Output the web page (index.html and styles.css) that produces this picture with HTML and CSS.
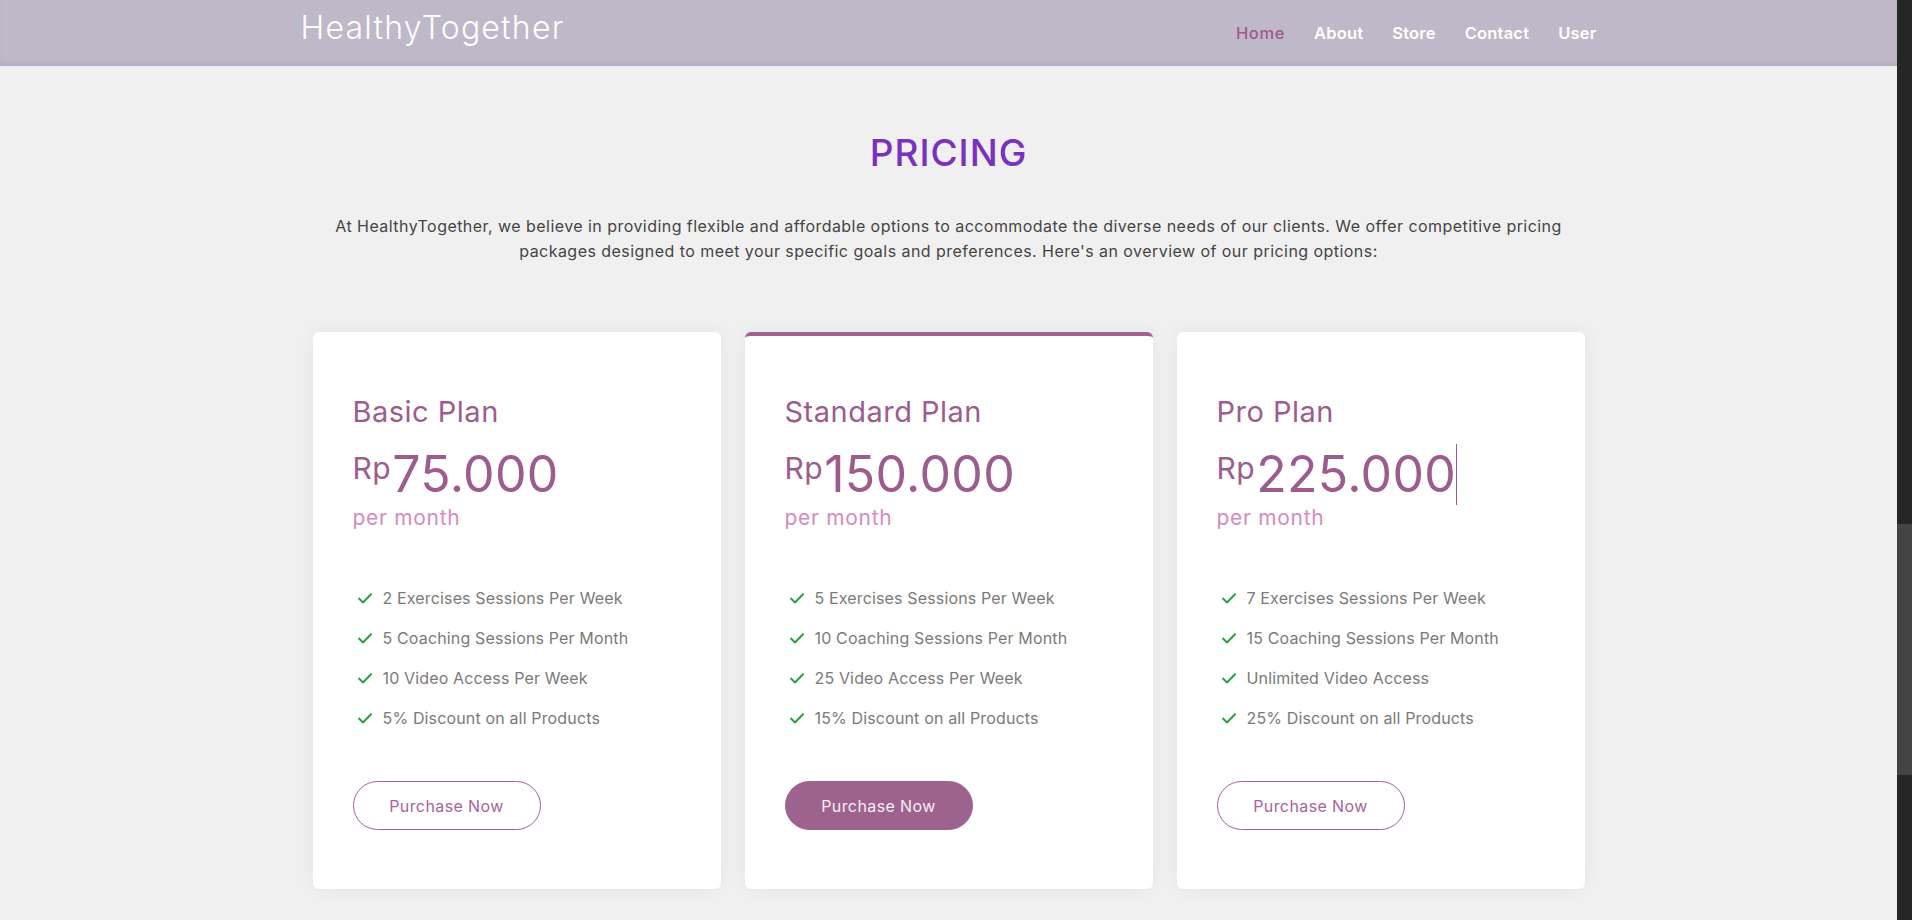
FILE: index.html
```html
<!DOCTYPE html>
<html lang="en">
<head>
<meta charset="utf-8">
<title>HealthyTogether - Pricing</title>
<link rel="stylesheet" href="styles.css">
</head>
<body>
<div class="viewport">
  <div class="page">
    <header class="navbar">
      <div class="container nav-inner">
        <a class="brand" href="#">HealthyTogether</a>
        <nav class="nav-links">
          <a class="nav-link active" href="#">Home</a>
          <a class="nav-link" href="#">About</a>
          <a class="nav-link" href="#">Store</a>
          <a class="nav-link" href="#">Contact</a>
          <a class="nav-link" href="#">User</a>
        </nav>
      </div>
    </header>

    <main class="container pricing">
      <h1 class="title">PRICING</h1>
      <p class="intro">At HealthyTogether, we believe in providing flexible and affordable options to accommodate the diverse needs of our clients. We offer competitive pricing<br>packages designed to meet your specific goals and preferences. Here's an overview of our pricing options:</p>

      <div class="cards">
        <div class="card">
          <h3 class="plan">Basic Plan</h3>
          <div class="price"><span class="cur">Rp</span><span class="amount">75.000</span></div>
          <div class="period">per month</div>
          <ul class="features">
            <li><svg class="check" viewBox="0 0 14 11"><path d="M1 5.5L5 9.5L13 1.2"/></svg>2 Exercises Sessions Per Week</li>
            <li><svg class="check" viewBox="0 0 14 11"><path d="M1 5.5L5 9.5L13 1.2"/></svg>5 Coaching Sessions Per Month</li>
            <li><svg class="check" viewBox="0 0 14 11"><path d="M1 5.5L5 9.5L13 1.2"/></svg>10 Video Access Per Week</li>
            <li><svg class="check" viewBox="0 0 14 11"><path d="M1 5.5L5 9.5L13 1.2"/></svg>5% Discount on all Products</li>
          </ul>
          <a class="btn" href="#">Purchase Now</a>
        </div>

        <div class="card featured">
          <h3 class="plan">Standard Plan</h3>
          <div class="price"><span class="cur">Rp</span><span class="amount">150.000</span></div>
          <div class="period">per month</div>
          <ul class="features">
            <li><svg class="check" viewBox="0 0 14 11"><path d="M1 5.5L5 9.5L13 1.2"/></svg>5 Exercises Sessions Per Week</li>
            <li><svg class="check" viewBox="0 0 14 11"><path d="M1 5.5L5 9.5L13 1.2"/></svg>10 Coaching Sessions Per Month</li>
            <li><svg class="check" viewBox="0 0 14 11"><path d="M1 5.5L5 9.5L13 1.2"/></svg>25 Video Access Per Week</li>
            <li><svg class="check" viewBox="0 0 14 11"><path d="M1 5.5L5 9.5L13 1.2"/></svg>15% Discount on all Products</li>
          </ul>
          <a class="btn btn-filled" href="#">Purchase Now</a>
        </div>

        <div class="card">
          <h3 class="plan">Pro Plan</h3>
          <div class="price"><span class="cur">Rp</span><span class="amount">225.000</span><span class="caret"></span></div>
          <div class="period">per month</div>
          <ul class="features">
            <li><svg class="check" viewBox="0 0 14 11"><path d="M1 5.5L5 9.5L13 1.2"/></svg>7 Exercises Sessions Per Week</li>
            <li><svg class="check" viewBox="0 0 14 11"><path d="M1 5.5L5 9.5L13 1.2"/></svg>15 Coaching Sessions Per Month</li>
            <li><svg class="check" viewBox="0 0 14 11"><path d="M1 5.5L5 9.5L13 1.2"/></svg>Unlimited Video Access</li>
            <li><svg class="check" viewBox="0 0 14 11"><path d="M1 5.5L5 9.5L13 1.2"/></svg>25% Discount on all Products</li>
          </ul>
          <a class="btn" href="#">Purchase Now</a>
        </div>
      </div>
    </main>
  </div>
  <div class="scrollbar"><div class="thumb"></div></div>
</div>
</body>
</html>
```

FILE: styles.css
```css
* { box-sizing: border-box; }

html, body {
  margin: 0;
  padding: 0;
}

body {
  font-family: "Inter", "Open Sans", "DejaVu Sans", sans-serif;
  background: #f0f0f0;
  color: #444;
}

a { text-decoration: none; }

.viewport {
  display: flex;
  width: 1912px;
  height: 920px;
  overflow: hidden;
}

.page {
  flex: 1;
  min-width: 0;
  background: #f0f0f0;
}

.scrollbar {
  width: 15px;
  flex: none;
  background: #262626;
  padding-top: 524px;
}

.thumb {
  width: 15px;
  height: 251px;
  background: #444444;
}

.container {
  width: 1320px;
  margin: 0 auto;
  padding: 0 12px;
}

/* Navbar */
.navbar {
  height: 66px;
  background: #bfb8c8;
  box-shadow: inset 0 -4px 4px -2px rgba(120, 100, 130, 0.18);
}

.nav-inner {
  height: 100%;
  display: flex;
  align-items: center;
  justify-content: space-between;
}

.brand {
  color: #ffffff;
  font-size: 32px;
  font-weight: 300;
  line-height: 1;
  margin-bottom: 10px;
  letter-spacing: 1.2px;
}

.nav-links {
  display: flex;
  gap: 29px;
  padding-bottom: 1px;
}

.nav-link {
  color: #ffffff;
  font-size: 16.5px;
  font-weight: 600;
  line-height: 20px;
  letter-spacing: 0.2px;
}

.nav-link.active {
  color: #a0588f;
  font-weight: 500;
  letter-spacing: 0.6px;
}

/* Pricing */
.pricing {
  padding-top: 65px;
}

.title {
  margin: 0;
  text-align: center;
  font-size: 37px;
  line-height: 43px;
  font-weight: 500;
  letter-spacing: 1px;
  color: #7b30be;
}

.intro {
  margin: 40px 0 0;
  text-align: center;
  font-size: 16px;
  line-height: 25px;
  letter-spacing: 0.45px;
  color: #454545;
}

.cards {
  display: grid;
  grid-template-columns: repeat(3, 1fr);
  gap: 24px;
  padding: 0 12px;
  margin-top: 68px;
}

.card {
  background: #ffffff;
  border-radius: 6px;
  border-top: 4px solid #ffffff;
  padding: 59px 40px 59px;
  box-shadow: 0 0 18px rgba(0, 0, 0, 0.05);
}

.card.featured {
  border-top-color: #a0628e;
}

.plan {
  margin: 0;
  font-size: 29px;
  line-height: 34px;
  font-weight: 400;
  letter-spacing: 0.5px;
  color: #9c5c8d;
}

.price {
  margin-top: 20px;
  font-size: 50px;
  line-height: 50px;
  height: 50px;
  color: #9c5c8d;
  white-space: nowrap;
}

.cur {
  font-size: 30px;
  line-height: 29px;
  vertical-align: 13px;
  margin-right: 1px;
  letter-spacing: 0.5px;
}

.amount {
  font-weight: 400;
  letter-spacing: 0.3px;
}

.caret {
  display: inline-block;
  width: 1px;
  height: 61px;
  margin-top: -6px;
  background: #9c5c8d;
  vertical-align: -13px;
}

.period {
  margin-top: 7px;
  font-size: 21px;
  line-height: 23px;
  letter-spacing: 0.7px;
  color: #d58bc5;
}

.features {
  list-style: none;
  margin: 57px 0 0;
  padding: 0;
}

.features li {
  display: flex;
  align-items: center;
  gap: 11px;
  font-size: 16px;
  line-height: 24px;
  letter-spacing: 0.15px;
  color: #7a7a7a;
  margin-bottom: 16px;
  padding-left: 5px;
}

.features li:last-child {
  margin-bottom: 0;
}

.check {
  width: 14px;
  height: 11px;
  flex: none;
  fill: none;
  stroke: #2b9e4c;
  stroke-width: 2;
  stroke-linecap: round;
  stroke-linejoin: round;
}

.btn {
  display: inline-flex;
  align-items: center;
  justify-content: center;
  margin-top: 51px;
  width: 188px;
  height: 49px;
  border: 1px solid #a0609a;
  border-radius: 25px;
  font-size: 16px;
  letter-spacing: 0.4px;
  color: #a8649c;
  background: #ffffff;
}

.btn-filled {
  background: #9e628f;
  border-color: #9e628f;
  color: #f6eef4;
}
```
